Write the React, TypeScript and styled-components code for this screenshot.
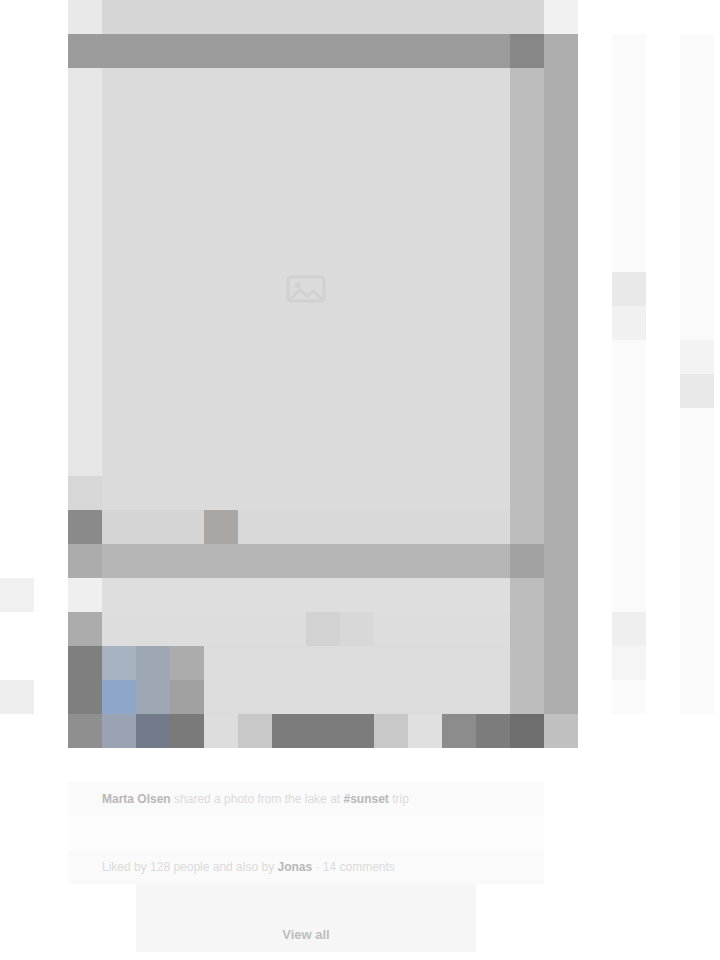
import { createGlobalStyle } from 'styled-components';
import styled from 'styled-components';

const GlobalStyle = createGlobalStyle`
  html, body {
    margin: 0;
    padding: 0;
    background: #ffffff;
    font-family: "Liberation Sans", Arial, sans-serif;
  }
`;

const Page = styled.div`
  width: 720px;
  height: 960px;
  display: flex;
  flex-direction: column;
  overflow: hidden;
`;

const Stage = styled.div`
  display: flex;
  align-items: flex-start;
`;

const Gutter = styled.div`
  width: 68px;
  padding-top: 578px;
  display: flex;
  flex-direction: column;
`;

const Mark = styled.div<{ $tone: string; $h?: number }>`
  width: 34px;
  height: ${p => p.$h ?? 34}px;
  background: ${p => p.$tone};
`;

const Panel = styled.div`
  width: 510px;
  display: flex;
  flex-direction: column;
`;

const TopStrip = styled.div`
  height: 34px;
  display: flex;
  background: #d6d6d6;
`;

const StripEnd = styled.div<{ $tone: string }>`
  width: 34px;
  background: ${p => p.$tone};
`;

const Body = styled.div`
  display: flex;
  height: 612px;
`;

const Main = styled.div`
  width: 476px;
  display: flex;
  flex-direction: column;
`;

const OuterTrack = styled.div<{ $tone?: string }>`
  width: 34px;
  background: ${p => p.$tone ?? '#aeaeae'};
`;

const TitleBar = styled.div`
  height: 34px;
  display: flex;
  justify-content: flex-end;
  background: #9b9b9b;
`;

const CloseButton = styled.div`
  width: 34px;
  height: 34px;
  background: #878787;
`;

const Viewer = styled.div`
  height: 442px;
  display: flex;
`;

const Rail = styled.div`
  width: 34px;
  display: flex;
  flex-direction: column;
  justify-content: flex-end;
  background: #e6e6e6;
`;

const Canvas = styled.div`
  flex: 1;
  background: #dbdbdb;
  display: flex;
  align-items: center;
  justify-content: center;
`;

const InnerTrack = styled.div`
  width: 34px;
  background: #bdbdbd;
`;

const Row = styled.div<{ $tone?: string }>`
  height: 34px;
  display: flex;
  background: ${p => p.$tone ?? 'transparent'};
`;

const Cell = styled.div<{ $tone: string; $w?: number }>`
  width: ${p => p.$w ?? 34}px;
  height: 34px;
  flex-shrink: 0;
  background: ${p => p.$tone};
`;

const Grow = styled.div<{ $tone: string }>`
  flex: 1;
  height: 34px;
  background: ${p => p.$tone};
  display: flex;
  justify-content: flex-start;
`;

const Profile = styled.div`
  display: flex;
  height: 102px;
`;

const RailCol = styled.div`
  width: 34px;
  display: flex;
  flex-direction: column;
`;

const Avatar = styled.div`
  width: 102px;
  height: 102px;
  flex-shrink: 0;
  overflow: hidden;
  background: #9ca7b3;
  svg {
    display: block;
  }
`;

const RightCol = styled.div`
  width: 374px;
  display: flex;
  flex-direction: column;
`;

const Upper = styled.div`
  height: 68px;
  display: flex;
`;

const Fill = styled.div`
  flex: 1;
  background: #dcdcdc;
`;

const Actions = styled.div`
  height: 34px;
  display: flex;
`;

const Action = styled.div<{ $tone: string; $w?: number }>`
  width: ${p => p.$w ?? 34}px;
  height: 34px;
  background: ${p => p.$tone};
`;

const Peek = styled.div`
  display: flex;
  gap: 34px;
  margin-left: 34px;
  padding-top: 34px;
`;

const PeekStrip = styled.div`
  width: 34px;
  height: 680px;
  display: flex;
  flex-direction: column;
  background: #fafafa;
`;

const Gap = styled.div<{ $h: number }>`
  height: ${p => p.$h}px;
`;

const Captions = styled.div`
  margin: 34px 0 0 68px;
  width: 476px;
  display: flex;
  flex-direction: column;
`;

const Line = styled.p`
  margin: 0;
  height: 34px;
  line-height: 34px;
  font-size: 12px;
  color: #dadada;
  white-space: nowrap;
  padding-left: 34px;
  background: #fafafa;
`;

const Strong = styled.span`
  color: #b8b8b8;
  font-weight: 700;
`;

const Spacer = styled.div`
  height: 34px;
  background: #fdfdfd;
`;

const MoreButton = styled.div`
  margin-left: 68px;
  width: 340px;
  height: 68px;
  background: #f6f6f6;
  display: flex;
  align-items: flex-end;
  justify-content: center;
`;

const MoreLabel = styled.span`
  height: 34px;
  line-height: 34px;
  font-size: 13px;
  font-weight: 700;
  color: #bdbdbd;
  padding: 0 6px;
`;

const ImageGlyph = () => (
  <svg width="60" height="30" viewBox="0 0 60 30" fill="none">
    <rect x="12" y="3" width="36" height="24" rx="3" stroke="#d1d1d1" strokeWidth="3" />
    <circle cx="22" cy="11" r="3" fill="#d1d1d1" />
    <path d="M14 25l10-9 7 6 6-5 9 8" stroke="#d1d1d1" strokeWidth="3" />
  </svg>
);

const AvatarPicture = () => (
  <svg width="102" height="102" viewBox="0 0 3 3" preserveAspectRatio="none" shapeRendering="crispEdges">
    <rect x="0" y="0" width="1" height="1" fill="#a8b3c2" />
    <rect x="1" y="0" width="1" height="1" fill="#9da8b4" />
    <rect x="2" y="0" width="1" height="1" fill="#acacac" />
    <rect x="0" y="1" width="1" height="1" fill="#8da6c9" />
    <rect x="1" y="1" width="1" height="1" fill="#9ca7b3" />
    <rect x="2" y="1" width="1" height="1" fill="#a1a1a1" />
    <rect x="0" y="2" width="1" height="1" fill="#9aa2b4" />
    <rect x="1" y="2" width="1" height="1" fill="#737b8b" />
    <rect x="2" y="2" width="1" height="1" fill="#7a7a7a" />
  </svg>
);

export default function App() {
  return (
    <Page>
      <GlobalStyle />
      <Stage>
        <Gutter>
          <Mark $tone="#f0f0f0" />
          <Mark $tone="#ffffff" $h={68} />
          <Mark $tone="#eeeeee" />
        </Gutter>

        <Panel>
          <TopStrip>
            <StripEnd $tone="#e9e9e9" />
            <Grow $tone="#d6d6d6" />
            <StripEnd $tone="#f1f1f1" />
          </TopStrip>

          <Body>
            <Main>
              <TitleBar>
                <CloseButton />
              </TitleBar>

              <Viewer>
                <Rail>
                  <Cell $tone="#d7d7d7" />
                </Rail>
                <Canvas>
                  <ImageGlyph />
                </Canvas>
                <InnerTrack />
              </Viewer>

              <Row>
                <Cell $tone="#8a8a8a" />
                <Cell $tone="#d5d5d5" $w={102} />
                <Cell $tone="#a9a6a3" />
                <Grow $tone="#d9d9d9" />
                <Cell $tone="#bdbdbd" />
              </Row>

              <Row $tone="#b6b6b6">
                <Cell $tone="#acacac" />
                <Grow $tone="#b6b6b6" />
                <Cell $tone="#a2a2a2" />
              </Row>

              <Row>
                <Cell $tone="#efefef" />
                <Grow $tone="#dedede" />
                <Cell $tone="#bdbdbd" />
              </Row>

              <Row>
                <Cell $tone="#acacac" />
                <Grow $tone="#dddddd">
                  <Cell $tone="#dddddd" $w={204} />
                  <Cell $tone="#d2d2d2" />
                  <Cell $tone="#d8d8d8" />
                </Grow>
                <Cell $tone="#bdbdbd" />
              </Row>
            </Main>
            <OuterTrack />
          </Body>

          <Profile>
            <RailCol>
              <Mark $tone="#7f7f7f" $h={68} />
              <Mark $tone="#8f8f8f" />
            </RailCol>
            <Avatar>
              <AvatarPicture />
            </Avatar>
            <RightCol>
              <Upper>
                <Fill />
                <InnerTrack />
                <OuterTrack />
              </Upper>
              <Actions>
                <Action $tone="#dddddd" />
                <Action $tone="#c8c8c8" />
                <Action $tone="#7c7c7c" $w={102} />
                <Action $tone="#c8c8c8" />
                <Action $tone="#e0e0e0" />
                <Action $tone="#8c8c8c" />
                <Action $tone="#7c7c7c" />
                <Action $tone="#6e6e6e" />
                <Action $tone="#c0c0c0" />
              </Actions>
            </RightCol>
          </Profile>
        </Panel>

        <Peek>
          <PeekStrip>
            <Gap $h={238} />
            <Mark $tone="#e9e9e9" />
            <Mark $tone="#f1f1f1" />
            <Gap $h={272} />
            <Mark $tone="#efefef" />
            <Mark $tone="#f5f5f5" />
          </PeekStrip>
          <PeekStrip>
            <Gap $h={306} />
            <Mark $tone="#f3f3f3" />
            <Mark $tone="#e9e9e9" />
          </PeekStrip>
        </Peek>
      </Stage>

      <Captions>
        <Line>
          <Strong>Marta Olsen</Strong> shared a photo from the lake at <Strong>#sunset</Strong> trip
        </Line>
        <Spacer />
        <Line>
          Liked by 128 people and also by <Strong>Jonas</Strong> · 14 comments
        </Line>
        <MoreButton>
          <MoreLabel>View all</MoreLabel>
        </MoreButton>
      </Captions>
    </Page>
  );
}
